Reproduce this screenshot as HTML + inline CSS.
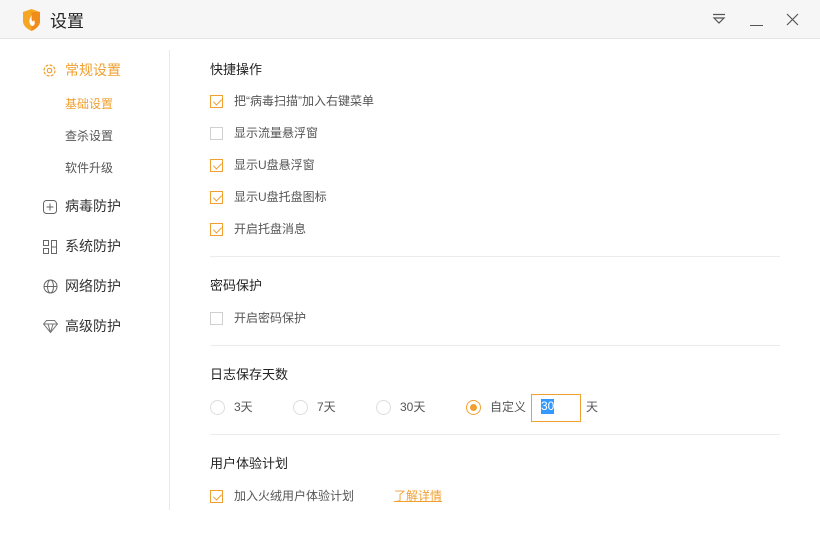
<!DOCTYPE html>
<html><head><meta charset="utf-8"><style>
*{margin:0;padding:0;box-sizing:border-box}
body{width:820px;height:540px;background:#fff;font-family:"Liberation Sans","Noto Sans CJK SC",sans-serif;position:relative;overflow:hidden;color:#333}
.tb{position:absolute;left:0;top:0;width:820px;height:39px;background:#f6f6f6;border-bottom:1px solid #e6e6e6}
.t{position:absolute;left:50px;top:7px;font-size:17px;color:#222}
.div{position:absolute;left:169px;top:50px;width:1px;height:460px;background:#e8e8e8}
.a{position:absolute;font-size:13px;white-space:nowrap;margin-top:-2px}
.nav{font-size:14px;color:#333}
.sub{font-size:12px;color:#555}
.h{font-size:13px;color:#222;margin-top:-3px}
.cb{position:absolute;width:13px;height:13px;border:1px solid #d0d0d0;background:#fff}
.cb.on{border-color:#f0a030}
.cb.on:after{content:"";position:absolute;left:3.5px;top:0.5px;width:4px;height:7px;border:solid #f0a030;border-width:0 1.5px 1.5px 0;transform:rotate(45deg)}
.lbl{font-size:12px;color:#555}
.hr{position:absolute;left:210px;width:570px;height:1px;background:#ececec}
.rd{position:absolute;width:15px;height:15px;border:1px solid #ddd;border-radius:50%}
.rd.on{border-color:#f0a030}
.rd.on:after{content:"";position:absolute;left:3px;top:3px;width:7px;height:7px;border-radius:50%;background:#f0a030}
</style></head><body>
<div class="tb"></div>
<svg style="position:absolute;left:22px;top:9px" width="19" height="22" viewBox="0 0 19 22"><path d="M1 3 L9.5 0 L18 3 L18 12 Q18 18 9.5 22 Q1 18 1 12Z" fill="#f5a623"/><path d="M9.5 3 L18 3 L18 12 Q18 18 9.5 22Z" fill="#f08c1a"/><path d="M10 6 Q6 11 8 15 Q9 17 11 17 Q14 15 12 11 Q11 13 10 12 Q9 9 10 6Z" fill="#fff"/></svg>
<div class="t">设置</div>
<svg style="position:absolute;left:712px;top:13px" width="14" height="12"><path d="M1 1.5H13M2 5L7 10L12 5Z" stroke="#555" fill="none" stroke-width="1.2"/></svg>
<div style="position:absolute;left:750px;top:25px;width:13px;height:1.3px;background:#555"></div>
<svg style="position:absolute;left:786px;top:13px" width="13" height="13"><path d="M1 1L12 12M12 1L1 12" stroke="#555" stroke-width="1.2"/></svg>

<svg style="position:absolute;left:42px;top:63px" width="15" height="15" viewBox="0 0 15 15"><circle cx="7.5" cy="7.5" r="5.5" fill="none" stroke="#f0a030" stroke-width="1.2" stroke-dasharray="3 1.3"/><circle cx="7.5" cy="7.5" r="2.2" fill="none" stroke="#f0a030" stroke-width="1.2"/></svg>
<div class="a nav" style="left:65px;top:62px;color:#f0a030">常规设置</div>
<div class="a sub" style="left:65px;top:97px;color:#f0a030">基础设置</div>
<div class="a sub" style="left:65px;top:129px">查杀设置</div>
<div class="a sub" style="left:65px;top:161px">软件升级</div>
<svg style="position:absolute;left:43px;top:200px" width="14" height="14"><rect x="0.5" y="0.5" width="13" height="13" rx="3" fill="none" stroke="#666"/><path d="M7 3.5V10.5M3.5 7H10.5" stroke="#666"/></svg>
<div class="a nav" style="left:65px;top:198px">病毒防护</div>
<svg style="position:absolute;left:43px;top:240px" width="14" height="14"><path d="M0.5 0.5H5.5V5.5H0.5ZM0.5 8.5H5.5V13.5H0.5ZM8.5 0.5H13.5V13.5H8.5ZM8.5 7H13.5" fill="none" stroke="#666"/></svg>
<div class="a nav" style="left:65px;top:238px">系统防护</div>
<svg style="position:absolute;left:43px;top:279px" width="15" height="15"><circle cx="7.5" cy="7.5" r="6.5" fill="none" stroke="#666"/><ellipse cx="7.5" cy="7.5" rx="3" ry="6.5" fill="none" stroke="#666"/><path d="M1 7.5H14" stroke="#666"/></svg>
<div class="a nav" style="left:65px;top:278px">网络防护</div>
<svg style="position:absolute;left:43px;top:320px" width="15" height="13"><path d="M3.5 0.5H11.5L14.5 4L7.5 12.5L0.5 4Z M0.5 4H14.5 M5 4L7.5 12.5L10 4" fill="none" stroke="#777"/></svg>
<div class="a nav" style="left:65px;top:318px">高级防护</div>
<div class="div"></div>

<div class="a h" style="left:210px;top:62px">快捷操作</div>
<div class="cb on" style="left:210px;top:95px"></div><div class="a lbl" style="left:234px;top:94px">把“病毒扫描”加入右键菜单</div>
<div class="cb" style="left:210px;top:127px"></div><div class="a lbl" style="left:234px;top:126px">显示流量悬浮窗</div>
<div class="cb on" style="left:210px;top:159px"></div><div class="a lbl" style="left:234px;top:158px">显示U盘悬浮窗</div>
<div class="cb on" style="left:210px;top:191px"></div><div class="a lbl" style="left:234px;top:190px">显示U盘托盘图标</div>
<div class="cb on" style="left:210px;top:223px"></div><div class="a lbl" style="left:234px;top:222px">开启托盘消息</div>
<div class="hr" style="top:256px"></div>
<div class="a h" style="left:210px;top:278px">密码保护</div>
<div class="cb" style="left:210px;top:312px"></div><div class="a lbl" style="left:234px;top:311px">开启密码保护</div>
<div class="hr" style="top:345px"></div>
<div class="a h" style="left:210px;top:367px">日志保存天数</div>
<div class="rd" style="left:210px;top:400px"></div><div class="a lbl" style="left:234px;top:400px">3天</div>
<div class="rd" style="left:293px;top:400px"></div><div class="a lbl" style="left:317px;top:400px">7天</div>
<div class="rd" style="left:376px;top:400px"></div><div class="a lbl" style="left:400px;top:400px">30天</div>
<div class="rd on" style="left:466px;top:400px"></div><div class="a lbl" style="left:490px;top:400px">自定义</div>
<div style="position:absolute;left:531px;top:394px;width:50px;height:28px;border:1px solid #f0a030"></div>
<div class="a" style="left:541px;top:401px;font-size:12px;background:#3399ff;color:#fff;line-height:15px">30</div>
<div class="a lbl" style="left:586px;top:400px">天</div>
<div class="hr" style="top:434px"></div>
<div class="a h" style="left:210px;top:456px">用户体验计划</div>
<div class="cb on" style="left:210px;top:490px"></div><div class="a lbl" style="left:234px;top:489px">加入火绒用户体验计划</div>
<div class="a lbl" style="left:394px;top:489px;color:#f0a030;text-decoration:underline">了解详情</div>
</body></html>
